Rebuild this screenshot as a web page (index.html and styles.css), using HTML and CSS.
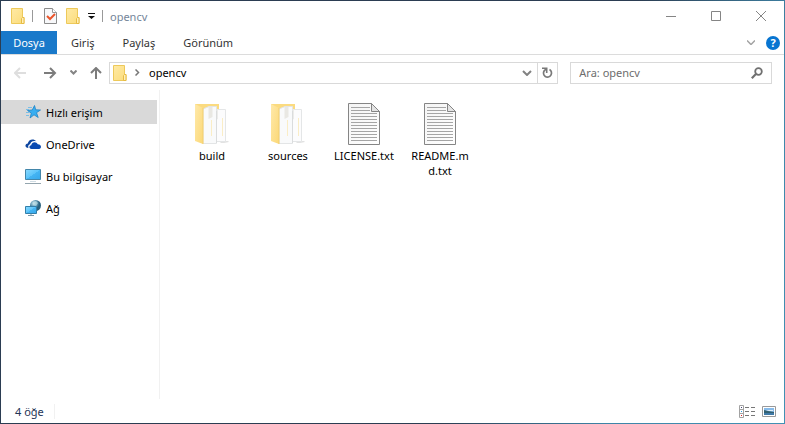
FILE: index.html
```html
<!DOCTYPE html>
<html lang="tr">
<head>
<meta charset="utf-8">
<title>opencv</title>
<link rel="stylesheet" href="styles.css">
</head>
<body>
<svg class="defs" aria-hidden="true">
  <defs>
    <linearGradient id="gold" x2="1" y2="1"><stop stop-color="#ffeaa5"/><stop offset="1" stop-color="#fbdc7b"/></linearGradient>
    <linearGradient id="flap" x2="1" y2="1"><stop stop-color="#ffe9a9"/><stop offset="1" stop-color="#fbd877"/></linearGradient>
    <linearGradient id="paper" x2="1" y2="1"><stop stop-color="#f4f4f4"/><stop offset="1" stop-color="#fff"/></linearGradient>
    <linearGradient id="screen" x2="1" y2="1"><stop stop-color="#8adaff"/><stop offset="0.5" stop-color="#5cc4fa"/><stop offset="0.5" stop-color="#45b5f3"/><stop offset="1" stop-color="#35a7eb"/></linearGradient>
    <radialGradient id="globe" cx="0.35" cy="0.3"><stop stop-color="#d9eef5"/><stop offset="0.5" stop-color="#6fa5bd"/><stop offset="1" stop-color="#28617e"/></radialGradient>
    <symbol id="small-folder" viewBox="0 0 14 16">
      <path d="M.5.5h11v9h1.500v6h-12.500z" fill="url(#gold)" stroke="#edc95a"/>
      <path d="M10.500 15.500v-5l1-1h1.500v6z" fill="#fff0b8" stroke="#e7bb43"/>
    </symbol>
    <symbol id="big-folder" viewBox="0 0 36 42">
      <path d="M1 1h24v8H1z" fill="#fbdb80"/>
      <path d="M28 38h6l1 1-5 1h-4z" fill="#e2e2e2"/>
      <path d="M20 7.500l4-1h7.500v32H20z" fill="#fcfcfd" stroke="#e4e6e7"/>
      <path d="M20 8l4-2v10l-4 2z" fill="#ececea"/>
      <path d="M9 6l6-2.500h7.500v37H9z" fill="#f9fafb" stroke="#e3e5e6"/>
      <path d="M14.500 4h4v10l-4 2z" fill="#e9e8e3"/>
      <path d="M17.500 17v16M28.500 15v18" stroke="#faedc6"/>
      <path d="M22.500 8v32" stroke="#dadcdd"/>
      <path d="M1 1l8 4v36l-8-3z" fill="url(#flap)"/>
      <path d="M9 5v36" stroke="#f2cf70"/>
    </symbol>
    <symbol id="text-file" viewBox="0 0 32 42">
      <path d="M.5.5h23l8 8v33H.5z" fill="url(#paper)" stroke="#858585"/>
      <path d="M23.500.5v8h8z" fill="#e4e4e4" stroke="#858585"/>
      <path d="M3 4.500h19M3 7.500h19M3 10.500h26M3 13.500h26M3 16.500h26M3 19.500h26M3 22.500h26M3 25.500h26M3 28.500h26M3 31.500h26M3 34.500h26M3 37.500h26" stroke="#a5a5a5"/>
    </symbol>
  </defs>
</svg>
<div class="window">
  <header class="titlebar">
    <svg class="folder"><use href="#small-folder"/></svg>
    <span class="divider"></span>
    <button class="plain check" aria-label="Özellikler"><svg width="13" height="16" viewBox="0 0 13 16"><path d="M.5.5h8l4 4v11H.5z" fill="#f7f8fa" stroke="#8b8b8b"/><path d="M8.500.5v4h4" fill="#fff" stroke="#999"/><path d="M3 8l3 3 5-5" fill="none" stroke="#ea552b" stroke-width="2"/></svg></button>
    <button class="plain" aria-label="Yeni klasör"><svg class="folder"><use href="#small-folder"/></svg></button>
    <button class="plain customize" aria-label="Hızlı Erişim Araç Çubuğunu Özelleştir"><svg width="7" height="6" viewBox="0 0 7 6"><path d="M0 0h7v1H0zM0 3h7L3.500 6z" fill="#111"/></svg></button>
    <span class="divider"></span>
    <h1 class="title">opencv</h1>
    <div class="controls">
      <button class="plain" aria-label="Simge durumuna küçült"><svg width="10" height="10" viewBox="0 0 10 10"><path d="M0 5.500h10"/></svg></button>
      <button class="plain" aria-label="Ekranı kapla"><svg width="10" height="10" viewBox="0 0 10 10"><path d="M.5.5h9v9h-9z"/></svg></button>
      <button class="plain" aria-label="Kapat"><svg width="10" height="10" viewBox="0 0 10 10"><path d="M0 0l10 10M10 0L0 10"/></svg></button>
    </div>
  </header>
  <nav class="ribbon">
    <button class="tab file">Dosya</button>
    <button class="tab">Giriş</button>
    <button class="tab">Paylaş</button>
    <button class="tab">Görünüm</button>
    <button class="plain expand" aria-label="Şeridi genişlet"><svg width="8" height="5" viewBox="0 0 8 5"><path d="M0 .5l4 4 4-4" fill="none" stroke="#a3a3a3" stroke-width="1.500"/></svg></button>
    <button class="help" aria-label="Yardım">?</button>
  </nav>
  <div class="navigation">
    <button class="plain back" aria-label="Geri"><svg width="13" height="12" viewBox="0 0 13 12"><path d="M12 6H1M6 1L1 6l5 5" fill="none" stroke="#dedede" stroke-width="2"/></svg></button>
    <button class="plain forward" aria-label="İleri"><svg width="13" height="12" viewBox="0 0 13 12"><path d="M0 6h11M6 1l5 5-5 5" fill="none" stroke="#7c7c7c" stroke-width="2"/></svg></button>
    <button class="plain recent" aria-label="Son konumlar"><svg width="7" height="5" viewBox="0 0 7 5"><path d="M.5.5l3 3 3-3" fill="none" stroke="#858585" stroke-width="2"/></svg></button>
    <button class="plain up" aria-label="Yukarı"><svg width="12" height="12" viewBox="0 0 12 12"><path d="M6 12V1M1 6l5-5 5 5" fill="none" stroke="#7c7c7c" stroke-width="2"/></svg></button>
    <div class="address">
      <svg class="folder"><use href="#small-folder"/></svg>
      <svg class="crumb" width="5" height="7" viewBox="0 0 5 7"><path d="M.5.5l3 3-3 3" fill="none" stroke="#777" stroke-width="1.500"/></svg>
      <span class="path">opencv</span>
      <button class="plain drop" aria-label="Önceki konumlar"><svg width="10" height="6" viewBox="0 0 10 6"><path d="M1 1l4 4 4-4" fill="none" stroke="#828282" stroke-width="2"/></svg></button>
      <button class="plain refresh" aria-label="Yenile"><svg width="11" height="12" viewBox="0 0 11 12"><path d="M7.500 2.600A4 4 0 1 1 2.200 3.800L4.500 1.500" fill="none" stroke="#797979" stroke-width="1.700"/><path d="M0 1.300h4.700V6" fill="none" stroke="#797979" stroke-width="1.600"/></svg></button>
    </div>
    <label class="search">
      <input type="text" placeholder="Ara: opencv" aria-label="Ara: opencv">
      <svg width="12" height="12" viewBox="0 0 12 12"><circle cx="7.500" cy="4.500" r="3.300" fill="none" stroke="#707070" stroke-width="1.800"/><path d="M5.200 6.800L.8 11.200" stroke="#707070" stroke-width="2.200"/></svg>
    </label>
  </div>
  <div class="content">
    <aside class="sidebar">
      <a class="place selected" href="#quick"><svg width="16" height="16" viewBox="0 0 16 16"><path d="M9.500 1.500l1.200 4.300 4.800.2-4 2.700 1.700 4.800-4.200-2.700-4 3.200 1.300-4.800L2.500 6.500l4.800-.6z" fill="#38aef1" stroke="#1c83c6" stroke-width=".8"/><path d="M3 3.500h4M1 5.500h3M1 8.500h3M1 11.500h3" stroke="#62b8e9" stroke-width=".8"/></svg>Hızlı erişim</a>
      <a class="place" href="#onedrive"><svg width="16" height="16" viewBox="0 0 16 16"><path d="M3.500 12C-.7 11.500-.2 7.800 2.800 7.500 3.300 3.500 8.500 1.800 11.200 5.200 7.500 4.200 5.300 6.300 5.100 8.300 3.300 8.800 2.800 10.500 3.500 12z" fill="#0c459f"/><path d="M6.500 13C3.500 12.700 4 9.300 6.200 9.200 6.800 5.500 11.500 5.200 12.800 8.200 16.600 8.200 17 12.600 14 13z" fill="#094ab2"/></svg>OneDrive</a>
      <a class="place" href="#pc"><svg width="16" height="16" viewBox="0 0 16 16"><path d="M.5 1.500h15v10H.5z" fill="url(#screen)" stroke="#4386aa"/><path d="M5 13.500h6" stroke="#d0dce3"/><path d="M0 15.500h16" stroke="#94a5ae"/></svg>Bu bilgisayar</a>
      <a class="place" href="#network"><svg width="16" height="16" viewBox="0 0 16 16"><circle cx="10.500" cy="5.500" r="5.500" fill="url(#globe)"/><path d="M8 2l3-1 2 2-2 3-3-1z" fill="#b9dbe3" opacity=".7"/><path d="M.5 6.500h11v7H.5z" fill="url(#screen)" stroke="#337fa9"/><path d="M6 14v1M3 15.500h6" stroke="#7996a5"/></svg>Ağ</a>
    </aside>
    <main class="files">
      <a class="item" href="#build"><svg class="item-folder"><use href="#big-folder"/></svg><span>build</span></a>
      <a class="item" href="#sources"><svg class="item-folder"><use href="#big-folder"/></svg><span>sources</span></a>
      <a class="item" href="#license"><svg class="item-file"><use href="#text-file"/></svg><span>LICENSE.txt</span></a>
      <a class="item" href="#readme"><svg class="item-file"><use href="#text-file"/></svg><span>README.md.txt</span></a>
    </main>
  </div>
  <footer class="status">
    <span class="count">4 öğe</span>
    <button class="plain details" aria-label="Ayrıntılar"><svg width="16" height="13" viewBox="0 0 16 13"><path d="M.5.5h4v12h-4zM.5 4.500h4M.5 8.500h4" fill="#fff" stroke="#a2a2a2"/><path d="M6 2.500h4M12 2.500h4M6 6.500h4M12 6.500h4M6 10.500h4M12 10.500h4" stroke="#777"/><path d="M2 2h1v1H2z" fill="#447"/><path d="M2 6h1v1H2z" fill="#2a9be0"/><path d="M2 10h1v1H2z" fill="#d22"/></svg></button>
    <button class="plain" aria-label="Büyük simgeler"><svg width="14" height="11" viewBox="0 0 14 11"><path d="M.5.5h13v10H.5z" fill="#fff" stroke="#999"/><path d="M2 2h10v7H2z" fill="#87bbea"/><path d="M2 4l4 1 6 1v1H2z" fill="#326070"/><path d="M4 4h7v1H7z" fill="#e0edf8"/><path d="M2 7h10v2H2z" fill="#3f79a7"/></svg></button>
  </footer>
</div>
</body>
</html>
```
FILE: styles.css
```css
* { box-sizing: border-box; }

body {
  margin: 0;
  padding: 1px;
  min-height: 100vh;
  display: flex;
  background: linear-gradient(115deg, #2b3d52 0%, #2b3d52 65%, #3e85a8 82%, #4291b4 100%);
  color: #000;
  font: 11px/15px "Noto Sans", "Open Sans", sans-serif;
}

svg { display: block; flex: none; }
.defs { position: absolute; width: 0; height: 0; }
button, input { font: inherit; color: inherit; }
a { color: inherit; text-decoration: none; }

.window {
  flex: 1;
  min-width: 0;
  display: flex;
  flex-direction: column;
  background: #fff;
}

.plain {
  display: flex;
  align-items: center;
  justify-content: center;
  flex: none;
  padding: 0;
  border: 0;
  background: none;
}

.folder { width: 14px; height: 16px; }

.titlebar {
  display: flex;
  align-items: center;
  height: 30px;
  padding-left: 10px;
}
.divider { width: 1px; height: 12px; margin: 0 7px; background: #999; }
.check { margin: 0 9px 0 4px; }
.customize { margin-left: 8px; }
.title { margin: 0; color: #75869a; font: inherit; }
.controls { display: flex; margin: 0 1px 0 auto; }
.controls .plain { width: 45px; height: 28px; }
.controls svg { fill: none; stroke: #858585; }

.ribbon {
  display: flex;
  align-items: center;
  height: 24px;
  padding-right: 4px;
  border-bottom: 1px solid #dcdcdc;
}
.tab {
  height: 23px;
  padding: 0 14px;
  border: 0;
  background: none;
  color: #333;
}
.file { width: 56px; padding: 0; background: #1979ca; color: #fff; }
.expand { margin: 0 11px 0 auto; }
.help {
  width: 14px;
  height: 14px;
  padding: 0;
  border: 0;
  border-radius: 50%;
  background: #0875d1;
  color: #fff;
  font-weight: bold;
  line-height: 14px;
}

.navigation {
  display: flex;
  align-items: center;
  height: 35px;
  padding: 0 12px 0 13px;
}
.forward { margin-left: 17px; }
.recent { margin-left: 13px; }
.up { margin-left: 13px; }
.address {
  display: flex;
  align-items: center;
  flex: 445;
  height: 22px;
  margin: 0 12px 0 7px;
  padding-left: 3px;
  border: 1px solid #d9d9d9;
}
.crumb { margin: 0 9px 0 8px; }
.drop { width: 20px; margin-left: auto; }
.refresh { width: 20px; height: 20px; border-left: 1px solid #d9d9d9; }
.search {
  display: flex;
  align-items: center;
  flex: 184;
  min-width: 0;
  height: 22px;
  padding: 0 8px;
  border: 1px solid #d9d9d9;
}
.search input {
  flex: 1;
  min-width: 0;
  padding: 0;
  border: 0;
  outline: 0;
  background: none;
}
.search input::placeholder { color: #6d6d6d; opacity: 1; }

.content { display: flex; flex: 1; }
.sidebar {
  display: flex;
  flex-direction: column;
  gap: 8px;
  width: 159px;
  padding: 10px 2px 0 0;
  border-right: 1px solid #f1f1f1;
}
.place {
  display: flex;
  align-items: center;
  gap: 5px;
  height: 24px;
  padding-left: 24px;
}
.selected { background: #d9d9d9; }

.files {
  display: flex;
  flex: 1;
  flex-wrap: wrap;
  align-content: flex-start;
  gap: 2px;
  padding: 13px 0 0 15px;
}
.item {
  display: flex;
  flex-direction: column;
  align-items: center;
  gap: 3px;
  width: 74px;
  padding: 0 5px;
  text-align: center;
}
.item span { max-width: 100%; overflow-wrap: anywhere; }
.item-folder { width: 36px; height: 42px; }
.item-file { width: 32px; height: 42px; }

.status {
  display: flex;
  align-items: center;
  height: 24px;
  padding: 0 8px 0 14px;
  color: #1f3557;
}
.count { padding-right: 10px; border-right: 1px solid #f1f1f1; }
.details { margin: 0 7px 0 auto; }
```
